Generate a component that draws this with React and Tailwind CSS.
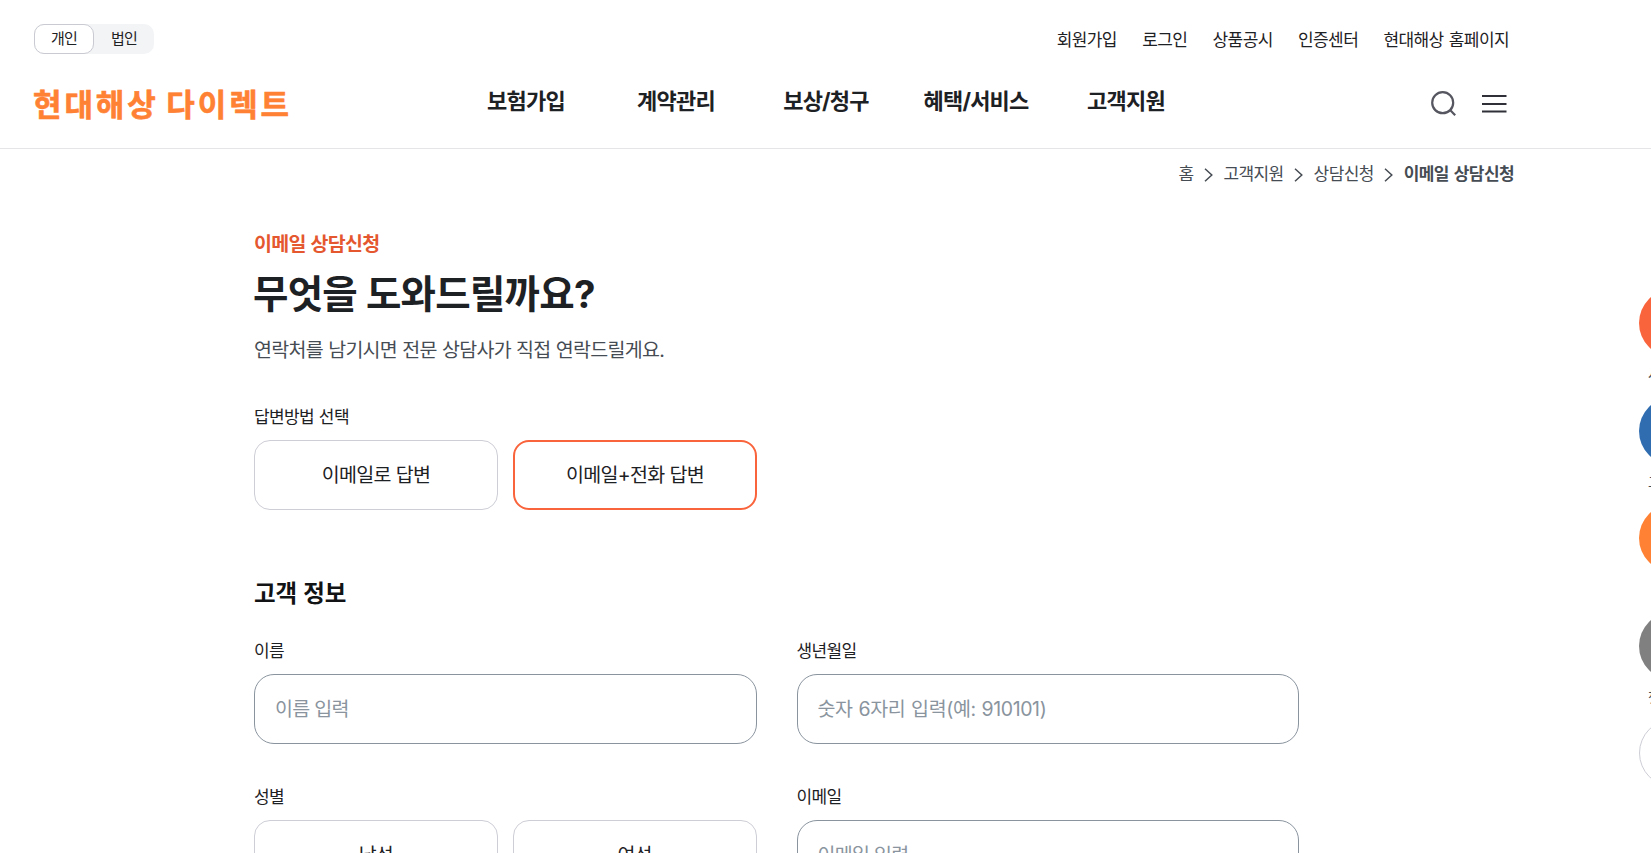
import React from 'react';

const font = "font-[Inter,'Noto_Sans_CJK_KR',sans-serif]";

const navItems = ['보험가입', '계약관리', '보상/청구', '혜택/서비스', '고객지원'];

const utilLinks = ['회원가입', '로그인', '상품공시', '인증센터', '현대해상 홈페이지'];

const quickItems = [
  { color: 'bg-[#f9643c]', label: '사고접수' },
  { color: 'bg-[#306db0]', label: '고객센터' },
  { color: 'bg-[#ff8133]', label: '카톡' },
  { color: 'bg-[#808080]', label: '챗봇상담' },
  { color: 'bg-white border border-[#cdced6]', label: '' },
];

function Header() {
  return (
    <header className="h-[149px] border-b border-[#e5e5e7] flex flex-col pl-[34px] pr-[142px]">
      <div className="flex justify-between pt-6 h-[78px]">
        <div className="flex h-[30px] w-[120px] rounded-[10px] bg-[#f3f4f6] text-[15px] tracking-[-0.8px] text-[#1e2124]">
          <button className="w-[60px] h-[30px] rounded-[10px] border border-[#c9cad2] bg-white leading-[28px]">개인</button>
          <button className="w-[60px] h-[30px] leading-[30px]">법인</button>
        </div>
        <nav className="flex gap-[25.3px] pt-px text-[17px] leading-[30px] tracking-[-0.6px] [word-spacing:1px] text-[#1e2124]">
          {utilLinks.map((t) => (
            <a key={t}>{t}</a>
          ))}
        </nav>
      </div>
      <div className="flex items-start">
        <div className="w-[417px] pt-[2px] -ml-px mr-px text-[31px] leading-[50px] font-bold tracking-[2.9px] [word-spacing:-2.6px] [-webkit-text-stroke:0.6px_#ff8133] text-[#ff8133] whitespace-nowrap">
          현대해상 다이렉트
        </div>
        <nav className="flex text-[22px] leading-[46px] font-bold tracking-[-0.8px] text-[#1e2124]">
          {navItems.map((label) => (
            <a key={label} className="w-[150px] text-center">{label}</a>
          ))}
        </nav>
        <div className="ml-auto flex items-center gap-[23px] pt-[12px] pr-[2px]">
          <svg width="28" height="28" viewBox="0 0 28 28" fill="none" stroke="#55565f" strokeWidth="2.2">
            <circle cx="12.7" cy="12.7" r="10.5" />
            <path d="M19.8 19.8L25.2 25.2" />
          </svg>
          <svg width="26" height="28" viewBox="0 0 26 28" fill="none" stroke="#2f3038" strokeWidth="2">
            <path d="M1 6H25.5M1 14H25.5M1 21.5H25.5" />
          </svg>
        </div>
      </div>
    </header>
  );
}

function Chevron() {
  return (
    <svg width="9" height="14" viewBox="0 0 9 14" fill="none" stroke="#464c53" strokeWidth="1.5">
      <path d="M1 0.8L7.8 7L1 13.2" />
    </svg>
  );
}

function Breadcrumb() {
  return (
    <div className="flex items-center justify-end gap-[10.5px] h-[50px] pt-px pr-[137px] text-[17px] tracking-[-0.6px] text-[#464c53]">
      <span>홈</span>
      <Chevron />
      <span>고객지원</span>
      <Chevron />
      <span>상담신청</span>
      <Chevron />
      <span className="font-bold [word-spacing:1.5px]">이메일 상담신청</span>
    </div>
  );
}

function Label({ children }) {
  return (
    <div className="pt-[2px] text-[17px] leading-[22px] tracking-[-0.6px] [word-spacing:0.5px] text-[#1e2124]">{children}</div>
  );
}

function Choice({ children, active }) {
  return (
    <button
      className={`h-[70px] rounded-2xl pt-px text-[19.5px] tracking-[-0.7px] [word-spacing:0.3px] text-[#1e2124] ${
        active ? 'border-2 border-[#f9643c]' : 'border border-[#cdced6]'
      }`}
    >
      {children}
    </button>
  );
}

function Field({ label, placeholder, spacing = 'tracking-[-0.7px]' }) {
  return (
    <div className="flex flex-col gap-3">
      <Label>{label}</Label>
      <input
        placeholder={placeholder}
        className={`h-[70px] w-full rounded-[20px] border border-[#8a949e] px-5 text-[19.5px] ${spacing} placeholder:text-[#8a949e] outline-none`}
      />
    </div>
  );
}

function QuickMenu() {
  return (
    <aside className="absolute top-[289px] left-[1639px] w-[68px] flex flex-col">
      {quickItems.map((q, i) => (
        <div key={i} className="h-[107.5px] flex flex-col items-center">
          <div className={`size-[68px] shrink-0 rounded-full ${q.color}`} />
          <span className="mt-[7px] text-[14px] leading-5 tracking-[-0.4px] text-[#464c53] whitespace-nowrap">{q.label}</span>
        </div>
      ))}
    </aside>
  );
}

export default function App() {
  return (
    <div className={`relative w-full h-[853px] overflow-hidden bg-white ${font}`}>
      <Header />
      <Breadcrumb />
      <main className="ml-[254px] w-[1045px]">
        <p className="pt-[31px] text-[19.5px] leading-[29px] font-bold tracking-[-0.7px] [word-spacing:0.8px] text-[#e4572f]">이메일 상담신청</p>
        <h1 className="mt-2 -ml-px text-[38.5px] leading-[54px] font-bold tracking-[-0.75px] [word-spacing:0.5px] text-[#1e2124]">무엇을 도와드릴까요?</h1>
        <p className="mt-[14px] text-[19.5px] leading-[30px] tracking-[-0.7px] [word-spacing:0.4px] text-[#464c53]">연락처를 남기시면 전문 상담사가 직접 연락드릴게요.</p>
        <div className="mt-[39px] flex flex-col gap-3 w-[503px]">
          <Label>답변방법 선택</Label>
          <div className="grid grid-cols-2 gap-[15px]">
            <Choice>이메일로 답변</Choice>
            <Choice active>이메일+전화 답변</Choice>
          </div>
        </div>
        <h2 className="mt-[66px] text-[23.5px] leading-9 font-bold tracking-[-0.1px] [word-spacing:0.8px] text-[#111315]">고객 정보</h2>
        <div className="mt-[26px] grid grid-cols-2 gap-x-10 gap-y-10">
          <Field label="이름" placeholder="이름 입력" />
          <Field
            label="생년월일"
            placeholder="숫자 6자리 입력(예: 910101)"
            spacing="tracking-[-0.4px] [word-spacing:0.8px]"
          />
          <div className="flex flex-col gap-3">
            <Label>성별</Label>
            <div className="grid grid-cols-2 gap-[15px]">
              <Choice>남성</Choice>
              <Choice>여성</Choice>
            </div>
          </div>
          <Field label="이메일" placeholder="이메일 입력" />
        </div>
      </main>
      <QuickMenu />
    </div>
  );
}
